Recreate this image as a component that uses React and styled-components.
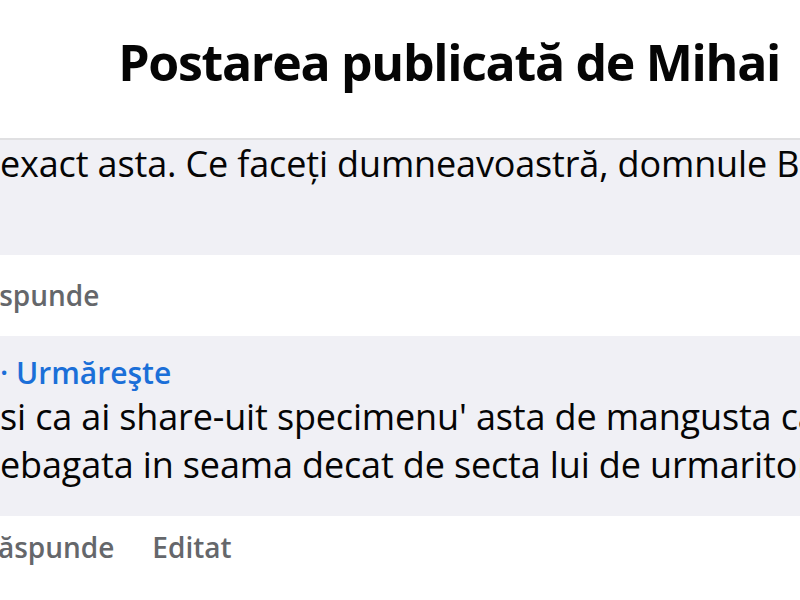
import React from 'react';
import styled, { createGlobalStyle } from 'styled-components';

const GlobalStyle = createGlobalStyle`
  html, body {
    margin: 0;
    padding: 0;
    background: #ffffff;
  }
  body {
    font-family: "Open Sans", "Noto Sans", sans-serif;
    overflow: hidden;
  }
`

const Page = styled.div`
  width: 800px;
  height: 600px;
  overflow: hidden;
  background: #ffffff;
  display: flex;
  flex-direction: column;
`

const Header = styled.div`
  height: 140px;
  flex-shrink: 0;
  display: flex;
  align-items: center;
  justify-content: flex-end;
  padding: 0 20px 14px 0;
  box-sizing: border-box;
  border-bottom: 2px solid #e0e0e2;
  box-shadow: 0 1px 2px rgba(0,0,0,0.06);
`

const Title = styled.h1`
  margin: 0;
  font-size: 50px;
  line-height: 60px;
  font-weight: 700;
  color: #050505;
  letter-spacing: -1.3px;
  white-space: nowrap;
`

const Bubble = styled.div`
  background: #f0f0f5;
  padding-top: ${p => p.top || 0}px;
  height: ${p => p.h}px;
  flex-shrink: 0;
  box-sizing: border-box;
  display: flex;
  flex-direction: column;
  overflow: hidden;
`

const Line = styled.div`
  font-size: 36px;
  line-height: ${p => p.lh || 48}px;
  letter-spacing: -0.15px;
  color: #050505;
  white-space: nowrap;
`

const Follow = styled.div`
  font-size: 30px;
  line-height: 40px;
  font-weight: 600;
  color: #1b6fd8;
  white-space: nowrap;
`

const Actions = styled.div`
  height: ${p => p.h}px;
  flex-shrink: 0;
  box-sizing: border-box;
  padding-top: ${p => p.top}px;
  display: flex;
  align-items: flex-start;
  gap: 38px;
  white-space: nowrap;
  overflow: hidden;
`

const Action = styled.span`
  font-size: 28px;
  line-height: 36px;
  font-weight: 600;
  color: #65676b;
  margin-left: ${p => p.cut || 0}px;
`

export default function App() {
  return (
    <Page>
      <GlobalStyle />
      <Header>
        <Title>Postarea publicată de Mihai</Title>
      </Header>
      <Bubble h={115} top={2}>
        <Line lh={44}>exact asta. Ce faceți dumneavoastră, domnule Benedek</Line>
      </Bubble>
      <Actions h={81} top={22}>
        <Action cut={-35}>Răspunde</Action>
      </Actions>
      <Bubble h={180} top={17}>
        <Follow>· Urmăreşte</Follow>
        <Line>si ca ai share-uit specimenu' asta de mangusta care</Line>
        <Line>ebagata in seama decat de secta lui de urmaritori</Line>
      </Bubble>
      <Actions h={84} top={13}>
        <Action cut={-20}>Răspunde</Action>
        <Action>Editat</Action>
      </Actions>
    </Page>
  );
}
